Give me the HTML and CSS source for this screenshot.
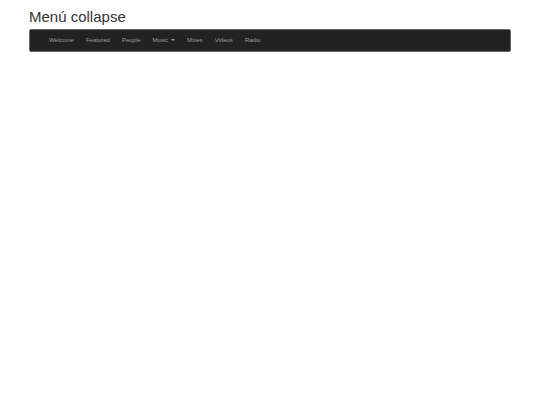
FILE: index.html
```html
<!DOCTYPE html>
<html lang="es">
<head>
    <meta charset="UTF-8">
    <meta name="viewport" content="width=device-width, initial-scale=1.0">
    <title>Menú collapse</title>
    <link rel="stylesheet" href="styles.css">
</head>
<body>
    <div class="container">
        <h1>Menú collapse</h1>
        <nav class="navbar">
            <ul class="nav">
                <li><a href="#">Welcome</a></li>
                <li><a href="#">Featured</a></li>
                <li><a href="#">People</a></li>
                <li><a href="#">Music <span class="caret"></span></a></li>
                <li><a href="#">Mixes</a></li>
                <li><a href="#">Videos</a></li>
                <li><a href="#">Radio</a></li>
            </ul>
        </nav>
    </div>
</body>
</html>
```

FILE: styles.css
```css
body {
    font-family: "Helvetica Neue", Helvetica, Arial, "Liberation Sans", sans-serif;
    background-color: #fff;
    color: #333;
    margin: 0;
}

.container {
    margin: 0 29px;
    padding-top: 8px;
}

h1 {
    font-size: 15px;
    font-weight: 400;
    line-height: 17px;
    margin: 0 0 4px;
}

.navbar {
    background-color: #222;
    border: 1px solid #666;
    border-radius: 2px;
}

.nav {
    display: flex;
    flex-wrap: wrap;
    list-style: none;
    margin: 0;
    padding: 0 13px;
}

.nav a {
    display: block;
    padding: 6px;
    font-size: 6px;
    line-height: 9px;
    color: #9d9d9d;
    text-decoration: none;
}

.nav a:hover {
    color: #fff;
}

.caret {
    display: inline-block;
    margin-left: 1px;
    vertical-align: middle;
    border-top: 2px solid;
    border-left: 2px solid transparent;
    border-right: 2px solid transparent;
}
```
